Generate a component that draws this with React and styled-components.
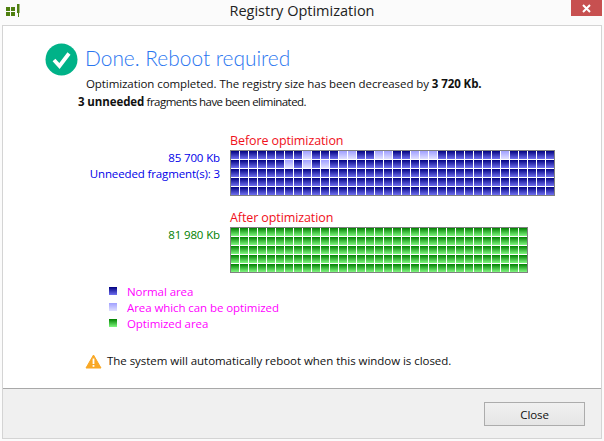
import React from "react";
import styled, { createGlobalStyle } from "styled-components";

const Global = createGlobalStyle`
  html, body { margin: 0; padding: 0; background: #fff; }
  body { font-family: "Open Sans", "Noto Sans", sans-serif; }
`;

const Win = styled.div`
  width: 604px; height: 441px; box-sizing: border-box; background: #fbfbfb;
  display: flex; flex-direction: column; overflow: hidden;
  padding: 0 2px 2px 2px;
`;
const TitleBar = styled.div`
  height: 25px; flex: none; display: flex; align-items: flex-start; justify-content: space-between;
`;
const AppIcon = styled.svg`
  width: 15px; height: 13px; margin: 4px 0 0 4px; flex: none; display: block;
`;
const Title = styled.div`
  flex: 1; text-align: center; font-size: 14.5px; line-height: 22px; color: #222; padding-left: 12px;
`;
const CloseX = styled.div`
  width: 31px; height: 16px; background: #c75050; display: flex; align-items: center; justify-content: center;
`;
const Client = styled.div`
  flex: 1; display: flex; flex-direction: column; border: 1px solid #d4d4d4; background: #fff; min-height: 0;
`;
const Body = styled.div`
  flex: 1; padding: 16px 0 0 42px; display: flex; flex-direction: column; min-height: 0;
`;
const HeadRow = styled.div`
  display: flex; align-items: center; gap: 7px; height: 34px;
`;
const Heading = styled.div`
  font-family: "Lato", sans-serif; font-weight: 300; font-size: 20.9px; color: #2a76f0; line-height: 34px; margin-top: -2px;
`;
const Line1 = styled.div`
  font-size: 11.5px; line-height: 18px; color: #111; margin: -1px 0 0 41px; letter-spacing: -0.08px; white-space: nowrap;
`;
const Line2 = styled(Line1)`
  margin: 0 0 0 33px; letter-spacing: -0.55px;
  b { letter-spacing: -0.1px; }
`;
const MapRow = styled.div`
  display: flex; margin: ${p => p.$top}px 0 0 0;
`;
const MapInfo = styled.div`
  width: 174px; margin-left: 1px; margin-right: 10px; padding-top: 17px; text-align: right; font-size: 11.5px; line-height: 16px;
  color: ${p => p.$color}; letter-spacing: -0.13px; flex: none; white-space: nowrap;
`;
const MapCol = styled.div`
  display: flex; flex-direction: column;
`;
const MapTitle = styled.div`
  font-size: 12.5px; line-height: 16px; height: 17px; color: #f01020; letter-spacing: -0.1px; white-space: nowrap;
`;
const Grid = styled.div`
  display: grid; grid-template-columns: repeat(${p => p.$cols}, 8px); gap: 1px; background: #fff;
  border: 1px solid #808080; width: max-content; padding: 0;
`;
const palette = {
  normal: "linear-gradient(#000080, #7070f0)",
  light: "linear-gradient(#a0a0ff, #e0e0ff)",
  green: "linear-gradient(#008000, #80f880)",
};
const Cell = styled.div`
  width: 8px; height: 8px; background: ${p => palette[p.$kind]};
`;
const Legend = styled.div`
  display: flex; flex-direction: column; margin: 10px 0 0 64px; gap: 0;
`;
const LegendRow = styled.div`
  display: flex; align-items: center; height: 16px; gap: 10px; font-size: 11.5px; color: #ff00ff; letter-spacing: -0.08px;
`;
const Swatch = styled.div`
  width: 8px; height: 8px; background: ${p => palette[p.$kind]};
`;
const Notice = styled.div`
  display: flex; align-items: center; gap: 5px; margin: 21px 0 0 40px; font-size: 11.5px; line-height: 18px; color: #111; letter-spacing: -0.04px; white-space: nowrap;
`;
const Footer = styled.div`
  height: 50px; flex: none; background: #f0f0f0; border-top: 1px solid #a8a8a8; display: flex; align-items: flex-start; justify-content: flex-end; box-sizing: border-box; padding: 13px 16px 0 0;
`;
const Button = styled.button`
  width: 101px; height: 24px; box-sizing: border-box; border: 1px solid #acacac; background: linear-gradient(#f0f0f0, #e5e5e5); font-family: inherit; font-size: 11.5px; color: #111; padding: 0; letter-spacing: -0.1px;
`;

const lights = { 0: [8, 12, 13, 16, 17, 20, 21, 22, 30], 1: [6, 8, 10] };
function CellGrid({ cols, green }) {
  const cells = [];
  for (let r = 0; r < 5; r++)
    for (let c = 0; c < cols; c++) {
      const kind = green ? "green" : lights[r]?.includes(c) ? "light" : "normal";
      cells.push(<Cell key={r + "-" + c} $kind={kind} />);
    }
  return <Grid $cols={cols}>{cells}</Grid>;
}

export default function App() {
  return (
    <Win>
      <Global />
      <TitleBar>
        <AppIcon viewBox="0 0 15 13">
          <path d="M0 3h4v4H0zM5 3h4v4H5zM0 8h4v4H0zM5 8h4v4H5z" fill="#4f7f10" />
          <path d="M11 0h2.5v9h-.5v4h-1V9h-1z" fill="#4f7f10" />
        </AppIcon>
        <Title>Registry Optimization</Title>
        <CloseX>
          <svg width="9" height="9" viewBox="0 0 9 9"><path d="M1 1l7 7M8 1L1 8" stroke="#fff" strokeWidth="2" /></svg>
        </CloseX>
      </TitleBar>
      <Client>
        <Body>
          <HeadRow>
            <svg width="33" height="33" viewBox="0 0 33 33">
              <circle cx="16.5" cy="16.5" r="16" fill="#00b288" />
              <path d="M9 17l5.5 6L24 10.5" fill="none" stroke="#fff" strokeWidth="3.8" />
            </svg>
            <Heading>Done. Reboot required</Heading>
          </HeadRow>
          <Line1>Optimization completed. The registry size has been decreased by <b>3 720 Kb.</b></Line1>
          <Line2><b>3 unneeded</b> fragments have been eliminated.</Line2>
          <MapRow $top={22}>
            <MapInfo $color="#0000e8">85 700 Kb<br />Unneeded fragment(s): 3</MapInfo>
            <MapCol>
              <MapTitle>Before optimization</MapTitle>
              <CellGrid cols={36} />
            </MapCol>
          </MapRow>
          <MapRow $top={14}>
            <MapInfo $color="#008000">81 980 Kb</MapInfo>
            <MapCol>
              <MapTitle>After optimization</MapTitle>
              <CellGrid cols={33} green />
            </MapCol>
          </MapRow>
          <Legend>
            <LegendRow><Swatch $kind="normal" />Normal area</LegendRow>
            <LegendRow><Swatch $kind="light" />Area which can be optimized</LegendRow>
            <LegendRow><Swatch $kind="green" />Optimized area</LegendRow>
          </Legend>
          <Notice>
            <svg width="17" height="15" viewBox="0 0 17 15">
              <path d="M8.5 1L16 14H1z" fill="#f9a825" stroke="#f9a825" strokeLinejoin="round" />
              <rect x="7.6" y="4.5" width="1.8" height="5.5" fill="#fff" />
              <rect x="7.6" y="11" width="1.8" height="1.8" fill="#fff" />
            </svg>
            The system will automatically reboot when this window is closed.
          </Notice>
        </Body>
        <Footer><Button>Close</Button></Footer>
      </Client>
    </Win>
  );
}
